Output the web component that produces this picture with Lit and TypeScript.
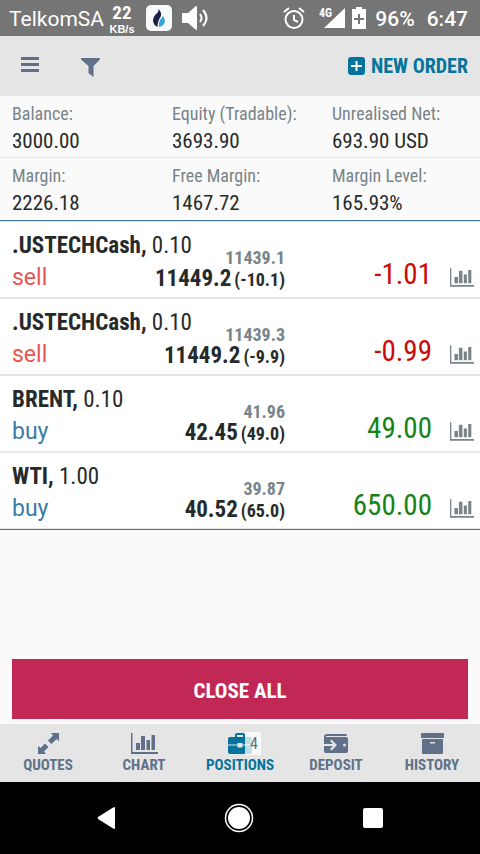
import { LitElement, html, css } from "lit";
import { customElement, property } from "lit/decorators.js";
import { classMap } from "lit/directives/class-map.js";

interface Position {
  symbol: string;
  volume: string;
  side: "buy" | "sell";
  open: string;
  current: string;
  points: string;
  profit: string;
}

const SUMMARY = [
  [
    ["Balance:", "3000.00"],
    ["Equity (Tradable):", "3693.90"],
    ["Unrealised Net:", "693.90 USD"],
  ],
  [
    ["Margin:", "2226.18"],
    ["Free Margin:", "1467.72"],
    ["Margin Level:", "165.93%"],
  ],
];

const POSITIONS: Position[] = [
  { symbol: ".USTECHCash", volume: "0.10", side: "sell", open: "11439.1", current: "11449.2", points: "-10.1", profit: "-1.01" },
  { symbol: ".USTECHCash", volume: "0.10", side: "sell", open: "11439.3", current: "11449.2", points: "-9.9", profit: "-0.99" },
  { symbol: "BRENT", volume: "0.10", side: "buy", open: "41.96", current: "42.45", points: "49.0", profit: "49.00" },
  { symbol: "WTI", volume: "1.00", side: "buy", open: "39.87", current: "40.52", points: "65.0", profit: "650.00" },
];

const chartIcon = (w: number, h: number) => html`<svg width=${w} height=${h} viewBox="0 0 27 21" aria-hidden="true">
  <path fill="currentColor" d="M0 0h1.500v19H27v2H0zM5 10h4v7H5zM10 3h4v14h-4zM15.500 7h3.500v10h-3.500zM20.500 2h3.500v15h-3.500z"/>
</svg>`;

const ICONS: Record<string, unknown> = {
  quotes: html`<svg width="22" height="21" viewBox="0 0 22 21" aria-hidden="true">
    <path fill="currentColor" d="M14 0h8v8l-2.500-2-5 5-3.500-3.500 5-5zM1 13l2.500 2L8 10.500l3.500 3.500L7 18.500 9 21H1z"/>
  </svg>`,
  chart: chartIcon(27, 21),
  positions: html`<svg width="24" height="21" viewBox="0 0 24 21" aria-hidden="true">
    <path fill="currentColor" d="M7 4V2q0-2 2-2h6q2 0 2 2v2h5q2 0 2 2v5.500h-9.500V10h-5v1.500H0V6q0-2 2-2zM9 4h6V2H9zM0 12.500h9.500v2h5v-2H24V19q0 2-2 2H2q-2 0-2-2z"/>
  </svg>`,
  deposit: html`<svg width="24" height="21" viewBox="0 0 24 21" aria-hidden="true">
    <path fill="currentColor" d="M3 1h19q1 0 1 2H2v1h20q2 0 2 2v12q0 2-2 2H2q-2 0-2-2v-5h9l-3 3 1.500 1.500L13 12 7.500 6.500 6 8l3 3H0V4q0-3 3-3z"/>
    <circle cx="20.500" cy="12" r="1.500" fill="#e5e5e5"/>
  </svg>`,
  history: html`<svg width="23" height="21" viewBox="0 0 23 21" aria-hidden="true">
    <path fill="currentColor" fill-rule="evenodd" d="M1 0h21q1 0 1 1v4H0V1q0-1 1-1zM1 6h21v14q0 1-1 1H2q-1 0-1-1zM9 9v1.500h5V9z"/>
  </svg>`,
};

@customElement("status-bar")
export class StatusBar extends LitElement {
  static styles = css`
    :host {
      display: flex;
      align-items: center;
      height: 36px;
      padding: 0 12px 0 9px;
      background: #757575;
      color: #fff;
      font-family: Roboto, sans-serif;
      font-size: 21px;
      line-height: 36px;
    }
    .group {
      display: flex;
      align-items: center;
    }
    .end {
      margin-left: auto;
    }
    .carrier, .percent, .clock {
      padding-top: 2px;
    }
    .speed {
      display: flex;
      flex-direction: column;
      align-items: center;
      width: 26px;
      margin: 0 11px 0 5px;
      font: bold 11px/11px "Liberation Sans", sans-serif;
    }
    .rate {
      font: bold 19px/22px "Liberation Sans Narrow", "Roboto Condensed", sans-serif;
    }
    .speaker {
      margin-left: 10px;
    }
    .alarm {
      margin-right: 14px;
    }
    .percent {
      margin: 0 12px 0 9px;
    }
    .clock, .percent {
      font-weight: 500;
    }
  `;

  render() {
    return html`
      <div class="group">
        <span class="carrier">TelkomSA</span>
        <span class="speed"><span class="rate">22</span><span>KB/s</span></span>
        <svg width="26" height="26" viewBox="0 0 26 26" aria-hidden="true">
          <rect width="26" height="26" rx="5" fill="#f8f9fb"/>
          <path fill="#1c2143" d="M12.500 4q4 4 2 8-3 4-3 10Q7 20 7 15q0-3 3-6 3-2 2.500-5z"/>
          <path fill="#35a5dc" d="M17 11q3 4 1 8-2 3-5 3-1-4 1-7 2-2 3-4z"/>
        </svg>
        <svg class="speaker" width="28" height="26" viewBox="0 0 28 26" aria-hidden="true">
          <path fill="#fff" d="M1 8h5l8-7q1 0 1 1v22q0 1-1 1l-8-7H1q-1 0-1-1V9q0-1 1-1z"/>
          <path fill="none" stroke="#fff" stroke-width="2" d="M18 9q3 4 0 8M21 5q7 8 0 16"/>
        </svg>
      </div>
      <div class="group end">
        <svg class="alarm" width="22" height="22" viewBox="0 0 22 22" aria-hidden="true">
          <circle cx="11" cy="12.500" r="8.500" fill="none" stroke="#fff" stroke-width="2"/>
          <path fill="none" stroke="#fff" stroke-width="2" d="M1 5l5-4M21 5l-5-4M11 8v5l4 2"/>
        </svg>
        <svg width="27" height="22" viewBox="0 0 27 22" aria-hidden="true">
          <path fill="#fff" d="M26 1v20H5z"/>
          <text x="0" y="10" fill="#fff" font-family="Roboto Condensed, Liberation Sans Narrow, sans-serif" font-weight="700" font-size="12">4G</text>
        </svg>
        <svg width="20" height="22" viewBox="0 0 20 22" aria-hidden="true">
          <path fill="#fff" d="M6 2h4V0h6v2h4v20H6z"/>
          <path stroke="#757575" stroke-width="2" d="M13 7v10M8 12h10"/>
        </svg>
        <span class="percent">96%</span>
        <span class="clock">6:47</span>
      </div>
    `;
  }
}

@customElement("position-row")
export class PositionRow extends LitElement {
  @property({ attribute: false }) item!: Position;

  static styles = css`
    :host {
      display: grid;
      grid-template-columns: 1fr auto 147px 48px;
      height: 75px;
      background: #fff;
      color: #262a2b;
    }
    .name {
      grid-area: 1 / 1 / 2 / 3;
      padding: 8px 0 0 12px;
      font-size: 23px;
      line-height: 32px;
    }
    .side {
      font-family: Roboto, sans-serif;
      font-size: 23px;
    }
    .sell {
      color: #ea5550;
    }
    .buy {
      color: #3a7ba6;
    }
    .prices {
      grid-area: 1 / 2;
      padding-top: 26px;
      text-align: right;
      font-weight: 700;
    }
    .open {
      color: #788487;
      font-size: 18px;
      line-height: 20px;
    }
    .current {
      font-size: 23px;
      line-height: 22px;
    }
    .points {
      font-size: 18px;
      margin-left: 3px;
    }
    .profit {
      grid-area: 1 / 3;
      padding-top: 34px;
      text-align: right;
      font-size: 29px;
      line-height: 36px;
      color: #178217;
    }
    .loss {
      color: #cc0a0a;
    }
    .chart {
      grid-area: 1 / 4;
      align-self: start;
      display: flex;
      justify-content: flex-end;
      margin-top: 46px;
      padding: 0 6px 0 0;
      border: 0;
      background: none;
      color: #788487;
    }
  `;

  render() {
    const p = this.item;
    return html`
      <div class="name">
        <div><b>${p.symbol},</b> ${p.volume}</div>
        <div class=${classMap({ side: true, [p.side]: true })}>${p.side}</div>
      </div>
      <div class="prices">
        <div class="open">${p.open}</div>
        <div class="current">${p.current}<span class="points">(${p.points})</span></div>
      </div>
      <div class=${classMap({ profit: true, loss: p.profit.startsWith("-") })}>${p.profit}</div>
      <button class="chart" aria-label="Show chart for ${p.symbol}">${chartIcon(24, 19)}</button>
    `;
  }
}

@customElement("app-root")
export class AppRoot extends LitElement {
  static styles = css`
    :host {
      display: flex;
      flex-direction: column;
      min-height: 100vh;
      background: #fafafa;
      color: #262a2b;
      font-family: "Roboto Condensed", "Liberation Sans Narrow", sans-serif;
    }
    button {
      border: 0;
      background: none;
      font: inherit;
      color: inherit;
      padding: 0;
    }
    .toolbar {
      display: flex;
      align-items: center;
      gap: 40px;
      height: 60px;
      padding: 0 12px 0 20px;
      background: #e5e5e5;
      color: #607089;
    }
    .icon {
      display: flex;
      width: 20px;
      justify-content: center;
    }
    .new {
      display: flex;
      align-items: center;
      gap: 6px;
      margin-left: auto;
      color: #05749c;
      font-size: 20px;
      font-weight: 700;
      line-height: 24px;
    }
    .summary {
      display: grid;
      grid-template-columns: 160fr 160fr 148fr;
      margin: 0;
      padding: 6px 0 1px 12px;
    }
    .summary + .summary {
      border-top: 1px solid #e5e5e5;
      padding-bottom: 2px;
    }
    dt {
      color: #788487;
      font-size: 18px;
      line-height: 24px;
    }
    dd {
      margin: 0;
      font-size: 21px;
      line-height: 30px;
    }
    .positions {
      display: flex;
      flex-direction: column;
      gap: 2px;
      padding: 1px 0;
      border: solid #3f7299;
      border-width: 1px 0;
      background: #e3e5e6;
    }
    .actions {
      margin-top: auto;
      padding: 0 12px 5px;
    }
    .close {
      width: 100%;
      height: 60px;
      padding-top: 3px;
      background: #c22856;
      color: #fff;
      font-size: 21px;
      font-weight: 700;
    }
    .tabs {
      display: grid;
      grid-template-columns: repeat(5, 1fr);
      height: 58px;
      background: #e5e5e5;
      color: #607089;
    }
    .tab {
      display: flex;
      flex-direction: column;
      align-items: center;
      padding-top: 9px;
      color: inherit;
      text-decoration: none;
      font-size: 15px;
      font-weight: 700;
      line-height: 22px;
    }
    .active {
      color: #05749c;
    }
    .glyph {
      display: flex;
      position: relative;
    }
    .badge {
      position: absolute;
      left: 17px;
      top: -1px;
      box-sizing: border-box;
      width: 16px;
      height: 23px;
      padding-left: 2px;
      background: rgba(255, 255, 255, 0.75);
      color: #607089;
      font-size: 16px;
      font-weight: 400;
      line-height: 24px;
      text-align: center;
    }
    .system {
      display: flex;
      justify-content: center;
      align-items: center;
      gap: 109px;
      height: 72px;
      background: #000;
    }
    .key {
      display: flex;
    }
  `;

  render() {
    const tabs = [
      ["quotes", "QUOTES"],
      ["chart", "CHART"],
      ["positions", "POSITIONS"],
      ["deposit", "DEPOSIT"],
      ["history", "HISTORY"],
    ];
    return html`
      <status-bar></status-bar>
      <header class="toolbar">
        <button class="icon" aria-label="Menu">
          <svg width="18" height="18" viewBox="0 0 18 18"><path fill="currentColor" d="M0 0h18v3H0zM0 6h18v3H0zM0 12h18v3H0z"/></svg>
        </button>
        <button class="icon" aria-label="Filter">
          <svg width="20" height="22" viewBox="0 0 20 22"><path fill="currentColor" d="M1.500 3h18q1 0 0 2l-6 6v11l-5-4v-7l-7-6q-1-2 0-2z"/></svg>
        </button>
        <button class="new">
          <svg width="17" height="18" viewBox="0 0 17 18" aria-hidden="true">
            <rect width="17" height="18" rx="3" fill="currentColor"/>
            <path stroke="#fff" stroke-width="2" d="M8.500 4v10M3 9h11"/>
          </svg>
          NEW ORDER
        </button>
      </header>
      ${SUMMARY.map((row) => html`
        <dl class="summary">
          ${row.map(([label, value]) => html`<div><dt>${label}</dt><dd>${value}</dd></div>`)}
        </dl>
      `)}
      <section class="positions" aria-label="Open positions">
        ${POSITIONS.map((p) => html`<position-row .item=${p}></position-row>`)}
      </section>
      <div class="actions"><button class="close">CLOSE ALL</button></div>
      <nav class="tabs">
        ${tabs.map(([id, label]) => html`
          <a href="#${id}" class=${classMap({ tab: true, active: id === "positions" })}>
            <span class="glyph">${ICONS[id]}${id === "positions" ? html`<span class="badge">4</span>` : ""}</span>
            ${label}
          </a>
        `)}
      </nav>
      <div class="system">
        <button class="key" aria-label="Back">
          <svg width="18" height="22" viewBox="0 0 18 22"><path fill="#fff" d="M17 0q1 0 1 1v20q0 1-1 1L1 12q-1-1 0-2z"/></svg>
        </button>
        <button class="key" aria-label="Home">
          <svg width="30" height="30" viewBox="0 0 30 30">
            <circle cx="15" cy="15" r="13.500" fill="none" stroke="#fff" stroke-width="1.500"/>
            <circle cx="15" cy="15" r="11" fill="#fff"/>
          </svg>
        </button>
        <button class="key" aria-label="Recent apps">
          <svg width="20" height="20" viewBox="0 0 20 20"><rect width="20" height="20" rx="2" fill="#fff"/></svg>
        </button>
      </div>
    `;
  }
}
